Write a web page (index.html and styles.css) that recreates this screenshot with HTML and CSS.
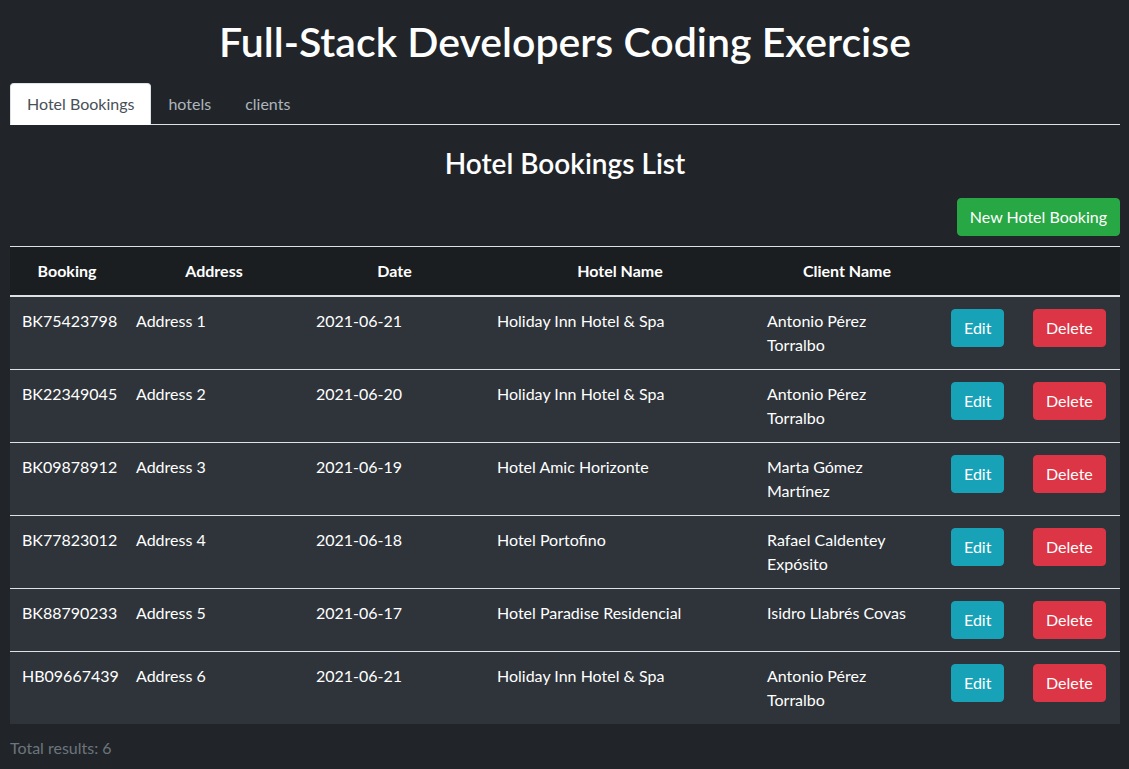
FILE: index.html
```html
<!DOCTYPE html>
<html lang="en">
<head>
<meta charset="utf-8">
<title>Full-Stack Developers Coding Exercise</title>
<link rel="stylesheet" href="styles.css">
</head>
<body>
<div class="app">
  <h1 class="title">Full-Stack Developers Coding Exercise</h1>
  <ul class="tabs">
    <li class="tab active">Hotel Bookings</li>
    <li class="tab">hotels</li>
    <li class="tab">clients</li>
  </ul>
  <h3 class="subtitle">Hotel Bookings List</h3>
  <div class="toolbar">
    <button class="btn btn-success">New Hotel Booking</button>
  </div>
  <table class="table">
    <colgroup>
      <col class="c1"><col class="c2"><col class="c3"><col class="c4"><col class="c5"><col class="c6"><col class="c7">
    </colgroup>
    <thead>
      <tr><th>Booking</th><th>Address</th><th>Date</th><th>Hotel Name</th><th>Client Name</th><th></th><th></th></tr>
    </thead>
    <tbody>
      <tr><td>BK75423798</td><td>Address 1</td><td>2021-06-21</td><td>Holiday Inn Hotel &amp; Spa</td><td>Antonio Pérez Torralbo</td><td><button class="btn btn-info">Edit</button></td><td><button class="btn btn-danger">Delete</button></td></tr>
      <tr><td>BK22349045</td><td>Address 2</td><td>2021-06-20</td><td>Holiday Inn Hotel &amp; Spa</td><td>Antonio Pérez Torralbo</td><td><button class="btn btn-info">Edit</button></td><td><button class="btn btn-danger">Delete</button></td></tr>
      <tr><td>BK09878912</td><td>Address 3</td><td>2021-06-19</td><td>Hotel Amic Horizonte</td><td>Marta Gómez Martínez</td><td><button class="btn btn-info">Edit</button></td><td><button class="btn btn-danger">Delete</button></td></tr>
      <tr><td>BK77823012</td><td>Address 4</td><td>2021-06-18</td><td>Hotel Portofino</td><td>Rafael Caldentey Expósito</td><td><button class="btn btn-info">Edit</button></td><td><button class="btn btn-danger">Delete</button></td></tr>
      <tr><td>BK88790233</td><td>Address 5</td><td>2021-06-17</td><td>Hotel Paradise Residencial</td><td>Isidro Llabrés Covas</td><td><button class="btn btn-info">Edit</button></td><td><button class="btn btn-danger">Delete</button></td></tr>
      <tr><td>HB09667439</td><td>Address 6</td><td>2021-06-21</td><td>Holiday Inn Hotel &amp; Spa</td><td>Antonio Pérez Torralbo</td><td><button class="btn btn-info">Edit</button></td><td><button class="btn btn-danger">Delete</button></td></tr>
    </tbody>
  </table>
  <p class="total">Total results: 6</p>
</div>
</body>
</html>
```
FILE: styles.css
```css
* { box-sizing: border-box; }
html, body {
  margin: 0;
  padding: 0;
  background: #212529;
}
body {
  font-family: "Lato", "Open Sans", "Liberation Sans", sans-serif;
  font-size: 16px;
  line-height: 24px;
  color: #ffffff;
}
.app {
  padding: 0 9px 0 10px;
}
.title {
  margin: 0;
  padding-top: 18px;
  height: 83px;
  text-align: center;
  font-size: 41px;
  line-height: 48px;
  font-weight: 600;
}
.tabs {
  list-style: none;
  margin: 0;
  padding: 0;
  display: flex;
  border-bottom: 1px solid #dee2e6;
}
.tab {
  padding: 8px 16px;
  margin-bottom: -1px;
  border: 1px solid transparent;
  border-top-left-radius: 4px;
  border-top-right-radius: 4px;
  color: #adb5bd;
}
.tab.active {
  background: #ffffff;
  color: #495057;
  border-color: #dee2e6 #dee2e6 #ffffff;
}
.subtitle {
  margin: 0;
  padding-top: 21px;
  height: 73px;
  text-align: center;
  font-size: 28px;
  line-height: 34px;
  font-weight: 600;
}
.toolbar {
  display: flex;
  justify-content: flex-end;
  height: 48px;
}
.btn {
  font-family: inherit;
  font-size: 16px;
  line-height: 24px;
  padding: 6px 12px;
  border: 1px solid transparent;
  border-radius: 4px;
  color: #ffffff;
  cursor: pointer;
}
.btn-success { background: #28a745; border-color: #28a745; height: 38px; }
.btn-info { background: #17a2b8; border-color: #17a2b8; }
.btn-danger { background: #dc3545; border-color: #dc3545; }
.table {
  width: 1110px;
  border-collapse: collapse;
  table-layout: fixed;
  background: #2e343a;
  color: #ffffff;
}
.c1 { width: 114px; }
.c2 { width: 180px; }
.c3 { width: 181px; }
.c4 { width: 270px; }
.c5 { width: 184px; }
.c6 { width: 82px; }
.c7 { width: 99px; }
.table thead th {
  background: #1b1e21;
  padding: 12px;
  font-weight: 700;
  text-align: center;
  border-top: 1px solid #dee2e6;
  border-bottom: 2px solid #dee2e6;
}
.table td {
  padding: 12px;
  vertical-align: top;
  text-align: left;
  border-top: 1px solid #dee2e6;
}
.table tbody tr:first-child td { border-top: none; }
.table td .btn { display: block; }
.total {
  margin: 12px 0 0;
  color: #6c757d;
}
```
